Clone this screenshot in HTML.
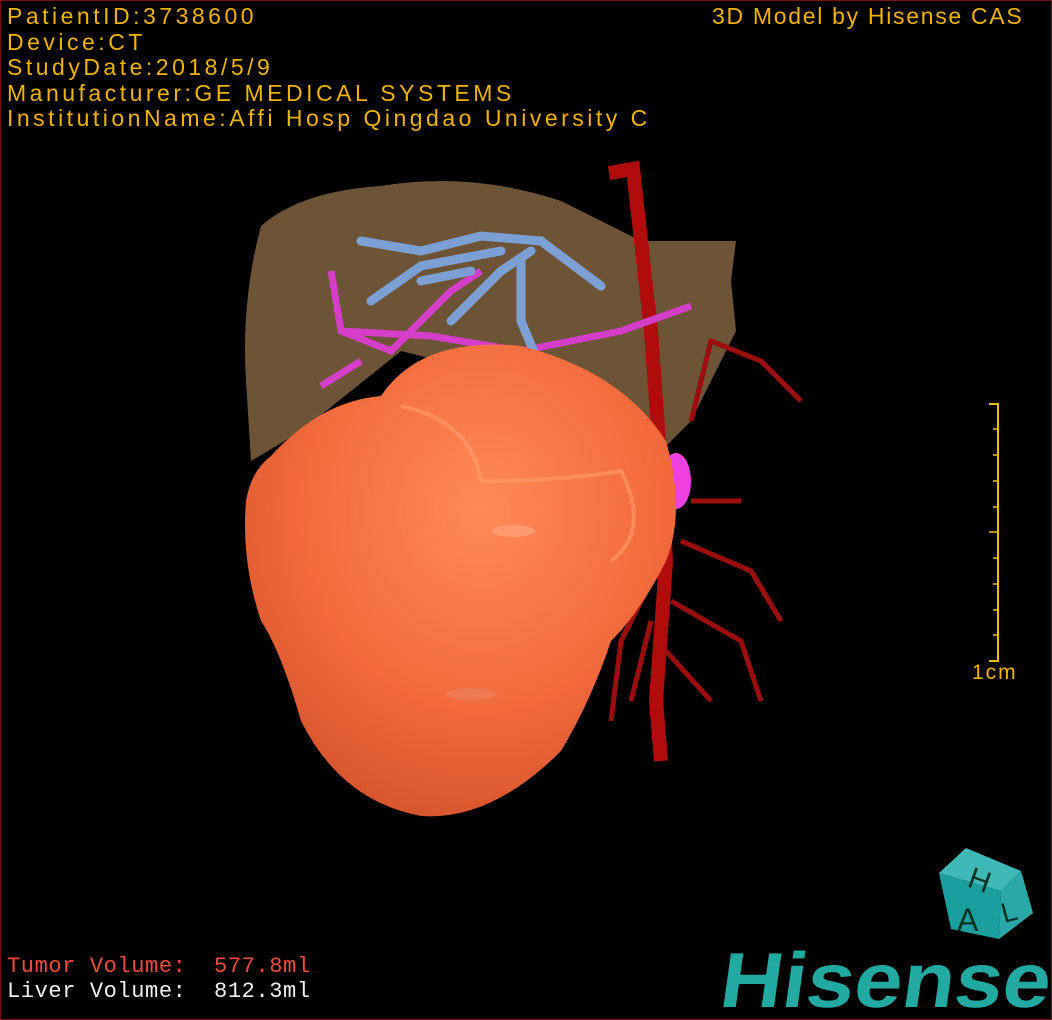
<!DOCTYPE html>
<html><head><meta charset="utf-8"><style>
html,body{margin:0;padding:0;background:#000;}
#w{position:relative;width:1050px;height:1018px;border:1px solid #7a1010;overflow:hidden;background:#000;font-family:"Liberation Sans",sans-serif;}
.t{position:absolute;color:#f0b400;font-size:23px;line-height:25.5px;white-space:pre;letter-spacing:3.5px;}
svg{position:absolute;left:0;top:0;}
</style></head><body><div id="w">
<svg width="1050" height="1018" viewBox="0 0 1050 1018">
<defs>
<radialGradient id="tg" cx="0.55" cy="0.35" r="0.7"><stop offset="0" stop-color="#ff8a5a"/><stop offset="0.6" stop-color="#f26a3c"/><stop offset="1" stop-color="#d4532c"/></radialGradient>
</defs>
<path d="M260 225 Q300 190 380 185 Q470 170 560 200 L640 240 L735 240 L730 280 L735 330 L710 380 L690 420 L660 450 L600 400 L400 350 L300 430 L250 460 L245 380 Q240 300 260 225Z" fill="#6e5436"/>
<path d="M608 172 L632 168 L650 330 L660 470 L665 560 L655 700 L660 760" stroke="#b00c0c" stroke-width="14" fill="none"/>
<path d="M690 420 L710 340 L760 360 L800 400 M690 500 L740 500 M680 540 L750 570 L780 620 M670 600 L740 640 L760 700 M665 650 L710 700 M660 560 L620 640 L610 720 M650 620 L630 700" stroke="#9c0e0e" stroke-width="5" fill="none"/>
<path d="M330 270 L340 330 L390 350 L450 290 L480 270 M340 330 L430 335 L520 350 L620 330 L690 305 M320 385 L360 360" stroke="#d43ec8" stroke-width="7" fill="none"/>
<path d="M360 240 L420 250 L480 235 L540 240 L600 285 M370 300 L420 265 L500 250 M450 320 L500 270 L530 250 M520 260 L520 320 L545 380 L530 455 M540 390 L600 420 L630 430 M420 280 L470 270" stroke="#7c9fd4" stroke-width="9" fill="none" stroke-linecap="round"/>
<ellipse cx="675" cy="480" rx="15" ry="28" fill="#f040e0"/>
<path d="M270 455 Q320 400 380 395 Q420 335 520 345 Q620 370 665 440 Q685 510 665 560 Q640 610 610 640 Q590 700 560 750 Q490 820 420 815 Q340 800 300 720 Q280 650 260 620 Q240 560 245 500 Q250 470 270 455Z" fill="url(#tg)"/>
<path d="M400 405 Q470 420 480 480 Q560 480 620 470 Q650 530 610 560" fill="none" stroke="#ff9c6c" stroke-width="4" opacity="0.6"/>
<ellipse cx="512" cy="530" rx="22" ry="6" fill="#ff9a70"/>
<ellipse cx="470" cy="693" rx="25" ry="6" fill="#ee7a52"/>
<path d="M988 403 L997 403 L997 660 L988 660" stroke="#e8c000" stroke-width="2" fill="none"/>
<g stroke="#e8c000" stroke-width="1.5">
<line x1="992" y1="428" x2="997" y2="428"/><line x1="992" y1="454" x2="997" y2="454"/><line x1="992" y1="480" x2="997" y2="480"/><line x1="992" y1="506" x2="997" y2="506"/><line x1="988" y1="531" x2="997" y2="531"/><line x1="992" y1="557" x2="997" y2="557"/><line x1="992" y1="583" x2="997" y2="583"/><line x1="992" y1="609" x2="997" y2="609"/><line x1="992" y1="634" x2="997" y2="634"/></g>
<polygon points="938,872 965,847 1020,870 1000,890" fill="#3fb8b8"/>
<polygon points="938,872 1000,890 998,938 950,928" fill="#1a9e9e"/>
<polygon points="1000,890 1020,870 1032,912 998,938" fill="#2aa8a8"/>
<text x="965" y="885" font-size="30" fill="#032" font-family="Liberation Sans" transform="rotate(20 965 885)">H</text>
<text x="956" y="930" font-size="32" fill="#032" font-family="Liberation Sans">A</text>
<text x="1003" y="922" font-size="28" fill="#032" font-family="Liberation Sans" transform="rotate(-15 1003 922)">L</text>
<text x="718" y="1006" font-size="78" font-weight="bold" fill="#21a9a2" font-family="Liberation Sans" textLength="330" lengthAdjust="spacingAndGlyphs" transform="skewX(-8) translate(140 0)">Hisense</text>
</svg>
<div class="t" style="left:6px;top:3px">PatientID:3738600
Device:CT
StudyDate:2018/5/9
Manufacturer:GE MEDICAL SYSTEMS
InstitutionName:Affi Hosp Qingdao University C</div>
<div class="t" style="left:711px;top:3px;letter-spacing:1.7px">3D Model by Hisense CAS</div>
<div class="t" style="left:971px;top:659px;font-size:21px;letter-spacing:2px">1cm</div>
<div class="t" style="left:6px;top:953px;color:#f04a3a;font-family:'Liberation Mono',monospace;font-size:22px;letter-spacing:0.6px">Tumor Volume:  577.8ml</div>
<div class="t" style="left:6px;top:978px;color:#f0f0f0;font-family:'Liberation Mono',monospace;font-size:22px;letter-spacing:0.6px">Liver Volume:  812.3ml</div>
</div></body></html>
